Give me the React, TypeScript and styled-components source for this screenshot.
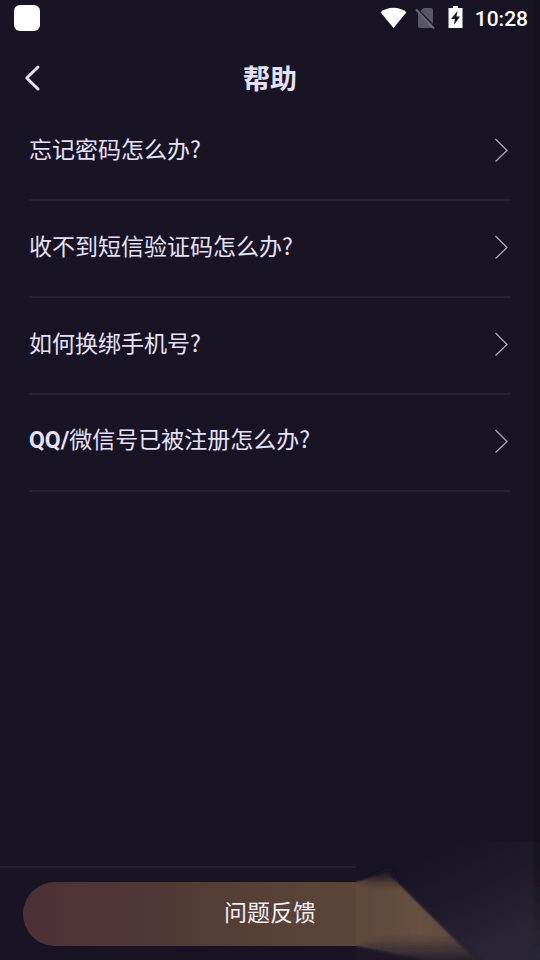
import React from "react";
import styled, { createGlobalStyle } from "styled-components";

const GlobalStyle = createGlobalStyle`
  *, *::before, *::after { box-sizing: border-box; }
  body {
    margin: 0;
    background: #181424;
    color: #e6e1fb;
    font-family: "Noto Sans CJK SC", "Noto Sans", sans-serif;
  }
`;

const Screen = styled.div`
  position: relative;
  display: flex;
  flex-direction: column;
  min-height: 100vh;
  overflow: hidden;
  background: linear-gradient(90deg, #181424 0 calc(100% - 7px), #14111c calc(100% - 5px) 100%);
`;

const StatusBar = styled.div`
  display: flex;
  align-items: center;
  justify-content: space-between;
  height: 36px;
  padding: 0 12px 0 14px;
`;

const AppBadge = styled.span`
  width: 26px;
  height: 26px;
  border-radius: 6px;
  background: #ffffff;
`;

const StatusIcons = styled.div`
  display: flex;
  align-items: center;
  svg { display: block; }
`;

const Clock = styled.time`
  margin-left: 12px;
  color: #ffffff;
  font: 500 21px/34px Roboto, sans-serif;
  padding-top: 2px;
`;

const Header = styled.header`
  display: grid;
  grid-template-columns: 64px 1fr 64px;
  align-items: center;
  height: 68px;
`;

const BackButton = styled.button`
  display: flex;
  align-items: center;
  height: 48px;
  margin-top: 16px;
  padding: 0 0 0 24px;
  border: 0;
  background: none;
  color: #e6e1fb;
  cursor: pointer;
`;

const Title = styled.h1`
  margin: 16px 0 0;
  text-align: center;
  font-size: 27px;
  line-height: 48px;
  font-weight: 700;
`;

const QuestionList = styled.ul`
  flex: 1;
  margin: 0;
  padding: 0 29px;
  list-style: none;
`;

const QuestionItem = styled.li`
  border-bottom: 2px solid #242130;
`;

const QuestionButton = styled.button`
  display: flex;
  align-items: center;
  justify-content: space-between;
  width: 100%;
  height: 95px;
  padding: 0 3px 3px 0;
  border: 0;
  background: none;
  color: inherit;
  font: inherit;
  font-size: 23px;
  line-height: 34px;
  text-align: left;
  cursor: pointer;
`;

const QuestionText = styled.span`
  padding-bottom: 4px;
`;

const Latin = styled.span`
  font-family: Roboto, sans-serif;
  font-weight: 700;
`;

const Footer = styled.footer`
  padding: 14px 23px;
  border-top: 2px solid #242130;
`;

const FeedbackButton = styled.button`
  display: block;
  width: 100%;
  height: 64px;
  padding: 0 0 6px;
  border: 0;
  border-radius: 32px;
  background: linear-gradient(90deg, #4d3036 0%, #513638 22%, #533c34 36%, #5d4638 68%, #66503e 100%);
  color: #f1edfa;
  font: inherit;
  font-size: 23px;
  line-height: 34px;
  cursor: pointer;
`;

const CornerShade = styled.svg`
  position: absolute;
  right: 0;
  bottom: 0;
  pointer-events: none;
`;

const questions = [
  { latin: "", text: "忘记密码怎么办?" },
  { latin: "", text: "收不到短信验证码怎么办?" },
  { latin: "", text: "如何换绑手机号?" },
  { latin: "QQ/", text: "微信号已被注册怎么办?" },
];

function BackIcon() {
  return (
    <svg width="17" height="28" viewBox="0 0 17 28" fill="none" stroke="currentColor" strokeWidth="3" strokeLinecap="round" strokeLinejoin="round" aria-hidden="true">
      <path d="M14 3 2.800 14 14 25" />
    </svg>
  );
}

function ForwardIcon() {
  return (
    <svg width="14" height="24" viewBox="0 0 14 24" fill="none" stroke="#aaa6b9" strokeWidth="1.3" aria-hidden="true">
      <path d="M1.500 1 13 12.500 1.500 23.500" />
    </svg>
  );
}

function WifiIcon() {
  return (
    <svg width="27" height="22" viewBox="0 0 27 22" fill="#ffffff" aria-hidden="true">
      <path d="M13.500 21 .5 5.300C4 2.200 8.600.7 13.500.7S23 2.200 26.500 5.300Z" />
    </svg>
  );
}

function NoSimIcon() {
  return (
    <svg width="41" height="24" viewBox="0 0 41 24" aria-hidden="true">
      <path d="M16.500 2H24q2 0 2 2v16q0 2-2 2H13q-2 0-2-2V7.500Z" fill="#5a5765" />
      <path d="m10 3 18 18.500" stroke="#181424" strokeWidth="2" />
      <path d="m9 3.500 18 19" stroke="#6a6774" strokeWidth="2" />
    </svg>
  );
}

function BatteryIcon() {
  return (
    <svg width="15" height="24" viewBox="0 0 15 24" aria-hidden="true">
      <path d="M5 0h5v2h4.500v20H.5V2H5Z" fill="#ffffff" />
      <path d="M9.500 5 3 13h3.800L6 19l6-8.500H8.500Z" fill="#181424" />
    </svg>
  );
}

function Shade() {
  return (
    <CornerShade width="184" height="118" viewBox="0 0 184 118" aria-hidden="true">
      <defs>
        <linearGradient id="veil" gradientUnits="userSpaceOnUse" x1="60" y1="20" x2="110" y2="125">
          <stop offset="0" stopColor="#181424" />
          <stop offset="0.5" stopColor="#201b2b" />
          <stop offset="1" stopColor="#2b2636" />
        </linearGradient>
        <linearGradient id="beam" gradientUnits="userSpaceOnUse" x1="0" y1="0" x2="118" y2="0">
          <stop offset="0" stopColor="#5f483a" />
          <stop offset="0.55" stopColor="#675041" />
          <stop offset="1" stopColor="#5b493f" />
        </linearGradient>
        <linearGradient id="lower" gradientUnits="userSpaceOnUse" x1="0" y1="94" x2="0" y2="118">
          <stop offset="0" stopColor="#2b2431" stopOpacity="0" />
          <stop offset="0.5" stopColor="#2b2431" stopOpacity="0.55" />
          <stop offset="1" stopColor="#211b2b" stopOpacity="0.95" />
        </linearGradient>
        <linearGradient id="upper" gradientUnits="userSpaceOnUse" x1="0" y1="30" x2="0" y2="46">
          <stop offset="0" stopColor="#1b1728" />
          <stop offset="1" stopColor="#1b1728" stopOpacity="0" />
        </linearGradient>
        <linearGradient id="edge" gradientUnits="userSpaceOnUse" x1="0" y1="0" x2="0" y2="118">
          <stop offset="0" stopColor="#15121d" />
          <stop offset="0.3" stopColor="#1b1822" />
          <stop offset="1" stopColor="#2a2733" />
        </linearGradient>
        <filter id="soft" filterUnits="userSpaceOnUse" x="-30" y="-20" width="230" height="170">
          <feGaussianBlur stdDeviation="1" />
        </filter>
        <filter id="haze" filterUnits="userSpaceOnUse" x="-30" y="-20" width="230" height="170">
          <feGaussianBlur stdDeviation="2" />
        </filter>
      </defs>
      <rect width="184" height="118" fill="url(#veil)" />
      <path d="M178-10h16v138h-16Z" fill="url(#edge)" filter="url(#soft)" />
      <path d="M-20 40H0L32 31 44 43 122 121H90L0 104H-20Z" fill="url(#beam)" filter="url(#soft)" />
      <path d="M3 39 34 27 46 43 24 46Z" fill="url(#upper)" filter="url(#haze)" />
      <path d="M4 104 34 94 98 94 126 122H60Z" fill="url(#lower)" filter="url(#haze)" />
      <path d="M-20 105H0L60 118V140H-20Z" fill="#1a1627" filter="url(#soft)" />
    </CornerShade>
  );
}

export default function App() {
  return (
    <>
      <GlobalStyle />
      <Screen>
        <StatusBar>
          <AppBadge />
          <StatusIcons>
            <WifiIcon />
            <NoSimIcon />
            <BatteryIcon />
            <Clock>10:28</Clock>
          </StatusIcons>
        </StatusBar>
        <Header>
          <BackButton type="button" aria-label="返回">
            <BackIcon />
          </BackButton>
          <Title>帮助</Title>
        </Header>
        <QuestionList>
          {questions.map(({ latin, text }) => (
            <QuestionItem key={text}>
              <QuestionButton type="button">
                <QuestionText>
                  {latin && <Latin>{latin}</Latin>}
                  {text}
                </QuestionText>
                <ForwardIcon />
              </QuestionButton>
            </QuestionItem>
          ))}
        </QuestionList>
        <Footer>
          <FeedbackButton type="button">问题反馈</FeedbackButton>
        </Footer>
        <Shade />
      </Screen>
    </>
  );
}
